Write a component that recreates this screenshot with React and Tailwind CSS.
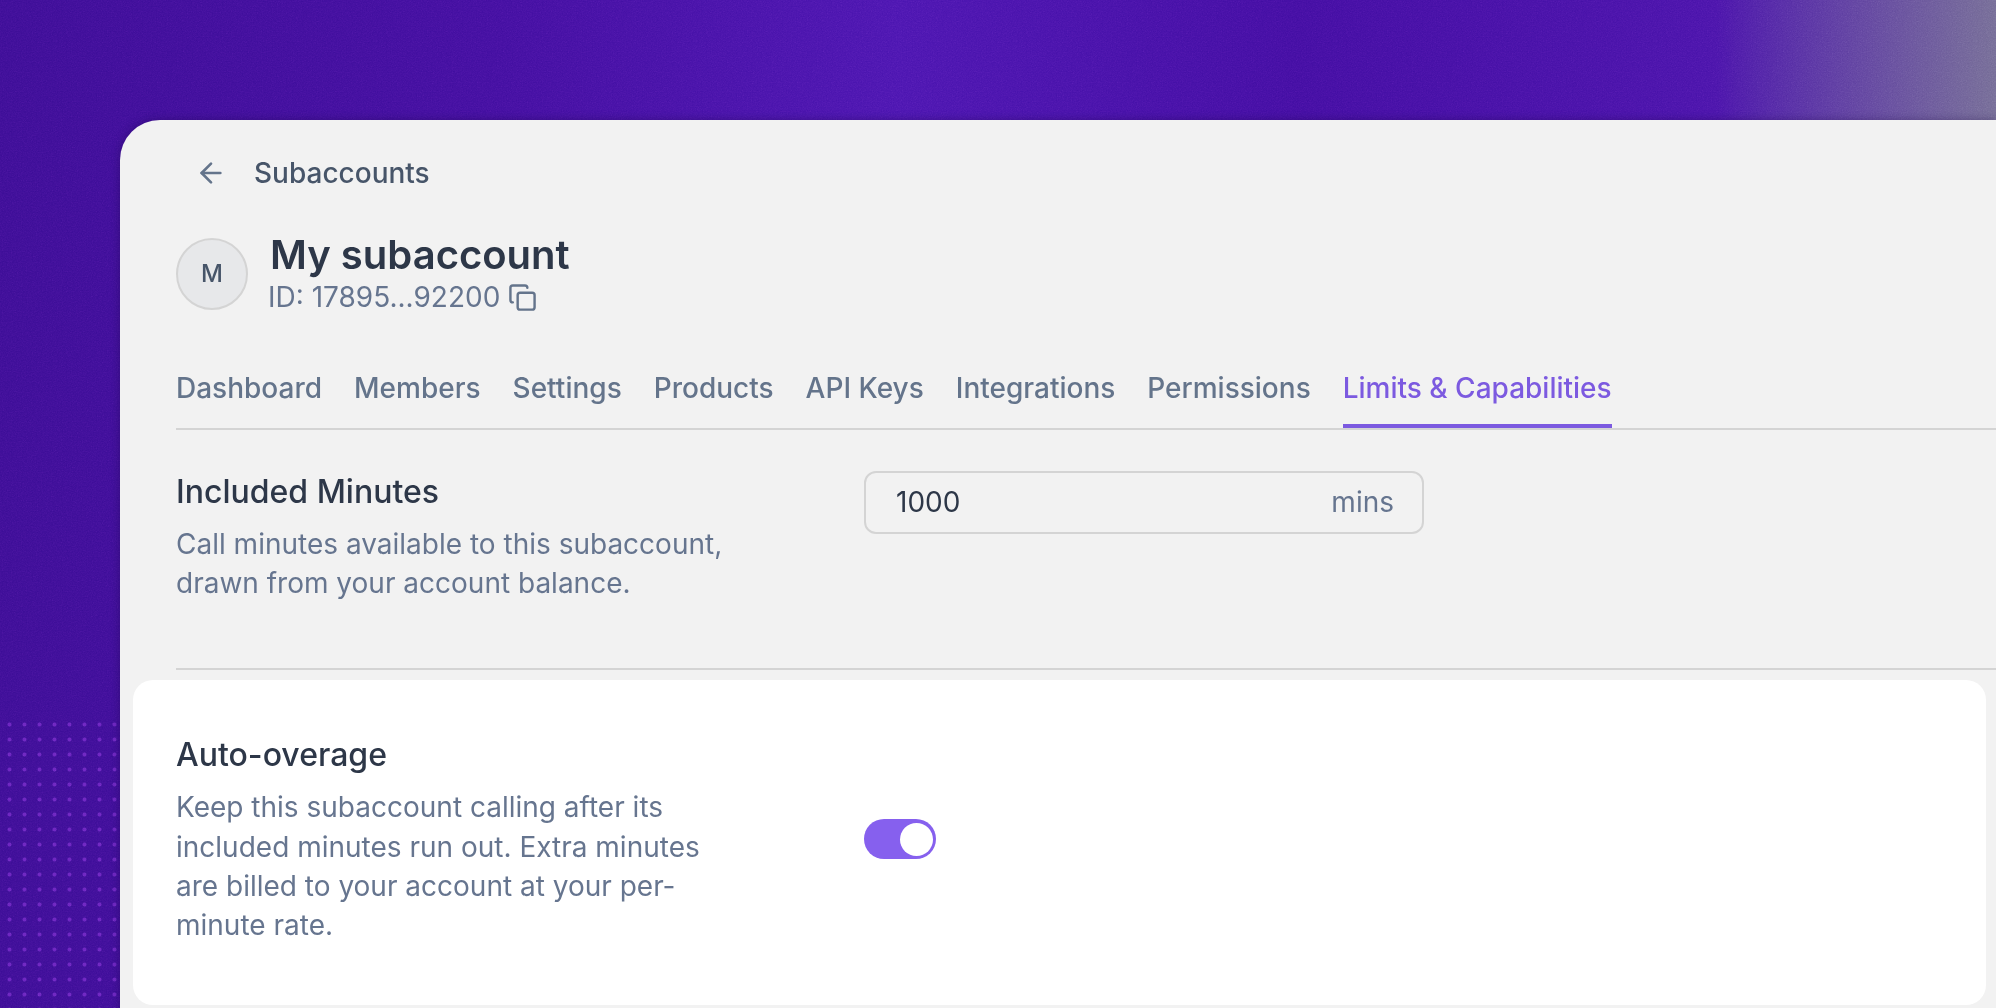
import React from 'react';
import { ArrowLeft, Copy } from 'lucide-react';

const tabs = ['Dashboard', 'Members', 'Settings', 'Products', 'API Keys', 'Integrations', 'Permissions'];

function Texture() {
  return (
    <svg className="absolute inset-0 w-full h-full opacity-50 mix-blend-soft-light" aria-hidden="true">
      <filter id="grain">
        <feTurbulence type="fractalNoise" baseFrequency="0.8" numOctaves="3" stitchTiles="stitch" />
        <feColorMatrix type="saturate" values="0" />
      </filter>
      <rect width="100%" height="100%" filter="url(#grain)" />
    </svg>
  );
}

function Row({ title, children, desc }) {
  return (
    <div className="grid grid-cols-[688px_1fr]">
      <div className="w-[550px]">
        <h2 className="text-[32px] leading-[40px] font-medium text-[#2d3748]">{title}</h2>
        <p className="mt-[13px] text-[28px] leading-[39.2px] text-[#66758f]">{desc}</p>
      </div>
      {children}
    </div>
  );
}

export default function App() {
  return (
    <div className="relative h-[1008px] w-full overflow-hidden pl-[120px] pt-[120px] bg-[linear-gradient(90deg,#3b0d96_0%,#410ea0_25%,#4a14b0_45%,#410da2_65%,#4812aa_85%,#4f1eaa_100%)] font-['Inter',sans-serif]">
      <div className="absolute right-0 top-0 w-[280px] h-[120px] bg-[linear-gradient(90deg,transparent,#746b96)]" />
      <div className="absolute left-[2px] top-[717px] w-[118px] h-[291px] opacity-45 bg-[radial-gradient(#a23cf0_1.5px,transparent_2.4px)] bg-[length:15px_15px]" />
      <Texture />

      <div className="relative h-[900px] rounded-tl-[40px] bg-[#f2f2f2] shadow-[0_0_10px_rgba(20,0,60,0.35)]">
        <div className="pl-[56px]">
          <div className="absolute top-[35px] left-[56px] flex items-center h-[36px]">
            <ArrowLeft className="ml-[19px] w-[32px] h-[32px] text-[#64748b]" strokeWidth={2} />
            <span className="ml-[27px] text-[28px] font-medium text-[#475569]">Subaccounts</span>
          </div>
          <div className="flex items-start gap-[22px] pt-[112px]">
            <div className="mt-[6px] w-[72px] h-[72px] rounded-full bg-[#e7e8ea] border-2 border-[#d4d4d4] flex items-center justify-center text-[24px] font-medium text-[#475569]">
              M
            </div>
            <div>
              <h1 className="text-[40px] leading-[46px] font-semibold text-[#2d3748]">My subaccount</h1>
              <div className="mt-[3px] -ml-[2px] flex items-center gap-[8px] text-[28px] leading-[32px] text-[#66758f]">
                ID: 17895...92200
                <Copy className="w-[29px] h-[29px] text-[#64748b]" strokeWidth={2} />
              </div>
            </div>
          </div>

          <div className="mt-[57px] flex gap-[32px] border-b-2 border-[#d4d4d4] h-[60px]">
            {tabs.map((t) => (
              <div key={t} className="text-[28px] leading-[36px] font-medium text-[#64748b]">{t}</div>
            ))}
            <div className="h-[58px] border-b-4 border-[#7c5ae0] text-[28px] leading-[36px] font-medium text-[#7c5ae0]">
              Limits &amp; Capabilities
            </div>
          </div>

          <div className="pt-[42px] pb-[65px] border-b-2 border-[#d4d4d4]">
            <Row title="Included Minutes" desc="Call minutes available to this subaccount, drawn from your account balance.">
              <div className="-mt-[1px] w-[560px] h-[63px] rounded-[12px] border-2 border-[#d4d4d4] flex items-center justify-between pl-[30px] pr-[28px] pb-[2px] text-[28px]">
                <span className="text-[#2d3748]">1000</span>
                <span className="text-[#66758f]">mins</span>
              </div>
            </Row>
          </div>
        </div>

        <div className="ml-[13px] mr-[10px] mt-[10px] h-[325px] rounded-[20px] bg-white pl-[43px] pt-[55px]">
          <Row title="Auto-overage" desc="Keep this subaccount calling after its included minutes run out. Extra minutes are billed to your account at your per-minute rate.">
            <div className="self-center -mt-[2px] w-[72px] h-[40px] rounded-full bg-[#8660ee] flex items-center justify-end pr-[3px]">
              <div className="w-[33px] h-[33px] rounded-full bg-white" />
            </div>
          </Row>
        </div>
      </div>
    </div>
  );
}
